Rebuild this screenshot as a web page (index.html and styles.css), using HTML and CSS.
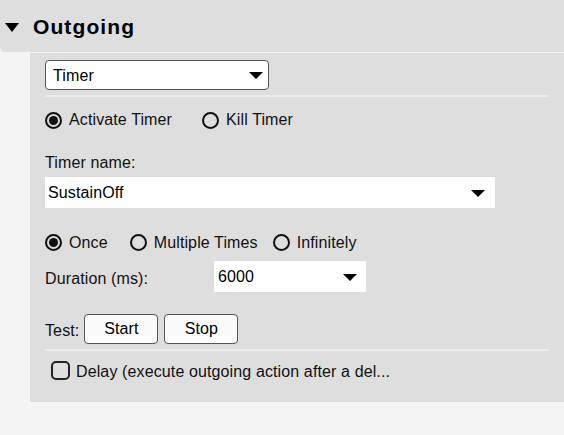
FILE: index.html
```html
<!DOCTYPE html>
<html>
<head>
<meta charset="utf-8">
<link rel="stylesheet" href="styles.css">
</head>
<body>
<div class="header">
  <svg class="caret" width="14" height="9" viewBox="0 0 14 9"><polygon points="0,0 14,0 7,9" fill="#000"/></svg>
  <span class="title">Outgoing</span>
</div>
<div class="panel">
  <div class="select select-type">
    <span>Timer</span>
    <svg class="arrow" width="14" height="7" viewBox="0 0 14 7"><polygon points="0,0 14,0 7,7" fill="#000"/></svg>
  </div>
  <div class="divider first"></div>
  <div class="radio-row row-action">
    <label class="option opt-activate"><span class="radio checked"></span><span>Activate Timer</span></label>
    <label class="option"><span class="radio"></span><span>Kill Timer</span></label>
  </div>
  <div class="field-label">Timer name:</div>
  <div class="combo combo-name">
    <span>SustainOff</span>
    <svg class="arrow" width="14" height="7" viewBox="0 0 14 7"><polygon points="0,0 14,0 7,7" fill="#000"/></svg>
  </div>
  <div class="radio-row row-repeat">
    <label class="option opt-once"><span class="radio checked"></span><span>Once</span></label>
    <label class="option opt-multi"><span class="radio"></span><span>Multiple Times</span></label>
    <label class="option"><span class="radio"></span><span>Infinitely</span></label>
  </div>
  <div class="duration-row">
    <span class="duration-label">Duration (ms):</span>
    <div class="combo combo-duration">
      <span>6000</span>
      <svg class="arrow" width="14" height="7" viewBox="0 0 14 7"><polygon points="0,0 14,0 7,7" fill="#000"/></svg>
    </div>
  </div>
  <div class="test-row">
    <span class="test-label">Test:</span>
    <button class="btn">Start</button>
    <button class="btn">Stop</button>
  </div>
  <div class="divider second"></div>
  <label class="check-row"><span class="checkbox"></span><span>Delay (execute outgoing action after a del...</span></label>
</div>
</body>
</html>
```
FILE: styles.css
```css
html, body {
  margin: 0;
  padding: 0;
}
body {
  background: #f4f4f4;
  font-family: "Liberation Sans", Arial, sans-serif;
  font-size: 16px;
  color: #111;
  letter-spacing: 0.12px;
}
.header {
  height: 52px;
  background: #dedede;
  border-bottom-left-radius: 6px;
  display: flex;
  align-items: center;
  padding-left: 5px;
}
.caret {
  margin-top: 3px;
  margin-right: 14px;
  flex: none;
}
.title {
  font-weight: bold;
  font-size: 21px;
  letter-spacing: 1.1px;
  color: #000;
  margin-top: 2px;
}
.panel {
  margin-top: 1px;
  margin-left: 30px;
  background: #dedede;
  height: 349px;
  box-sizing: border-box;
  padding: 7px 15px 0 15px;
  display: flex;
  flex-direction: column;
}
.select {
  width: 224px;
  height: 30px;
  box-sizing: border-box;
  border: 1px solid #555;
  border-radius: 4px;
  background: #fff;
  display: flex;
  align-items: center;
  justify-content: space-between;
  padding: 1px 5px 0 7px;
  color: #000;
}
.arrow {
  flex: none;
}
.divider {
  height: 2px;
  background: #ebebeb;
}
.divider.first {
  margin-top: 5px;
}
.divider.second {
  margin-top: 5px;
}
.radio-row {
  display: flex;
  align-items: center;
}
.row-action {
  height: 44px;
  padding-top: 2px;
  box-sizing: border-box;
}
.option {
  display: flex;
  align-items: center;
  gap: 7px;
}
.opt-activate {
  margin-right: 30px;
}
.opt-once {
  margin-right: 22px;
}
.opt-multi {
  margin-right: 15px;
}
.radio {
  width: 17px;
  height: 17px;
  box-sizing: border-box;
  border: 2px solid #111;
  border-radius: 50%;
  display: flex;
  align-items: center;
  justify-content: center;
  flex: none;
}
.radio.checked::after {
  content: "";
  width: 9px;
  height: 9px;
  border-radius: 50%;
  background: #111;
}
.field-label {
  margin-top: 12px;
  height: 19px;
  line-height: 20px;
}
.combo {
  height: 31px;
  background: #fff;
  display: flex;
  align-items: center;
  justify-content: space-between;
  box-sizing: border-box;
  color: #000;
}
.combo-name {
  margin-top: 5px;
  width: 450px;
  padding: 1px 10px 0 3px;
}
.row-repeat {
  margin-top: 24px;
  height: 20px;
  padding-top: 1px;
  box-sizing: border-box;
}
.duration-row {
  margin-top: 9px;
  display: flex;
  align-items: center;
}
.duration-label {
  width: 169px;
  margin-top: 4px;
}
.combo-duration {
  width: 152px;
  padding: 1px 9px 0 4px;
}
.test-row {
  margin-top: 22px;
  display: flex;
  align-items: center;
  gap: 6px;
}
.test-label {
  margin-right: -1px;
  margin-top: 3px;
}
.btn {
  width: 74px;
  height: 30px;
  box-sizing: border-box;
  border: 1px solid #555;
  border-radius: 4px;
  background: #fbfbfb;
  font-family: "Liberation Sans", Arial, sans-serif;
  font-size: 16px;
  color: #000;
  padding: 0;
  letter-spacing: 0.12px;
}
.check-row {
  margin-top: 9px;
  height: 21px;
  display: flex;
  align-items: center;
  gap: 6px;
  padding-left: 6px;
}
.check-row span:last-child {
  margin-top: 2px;
}
.checkbox {
  width: 19px;
  height: 19px;
  box-sizing: border-box;
  border: 2px solid #222;
  border-radius: 5px;
  flex: none;
}
```
